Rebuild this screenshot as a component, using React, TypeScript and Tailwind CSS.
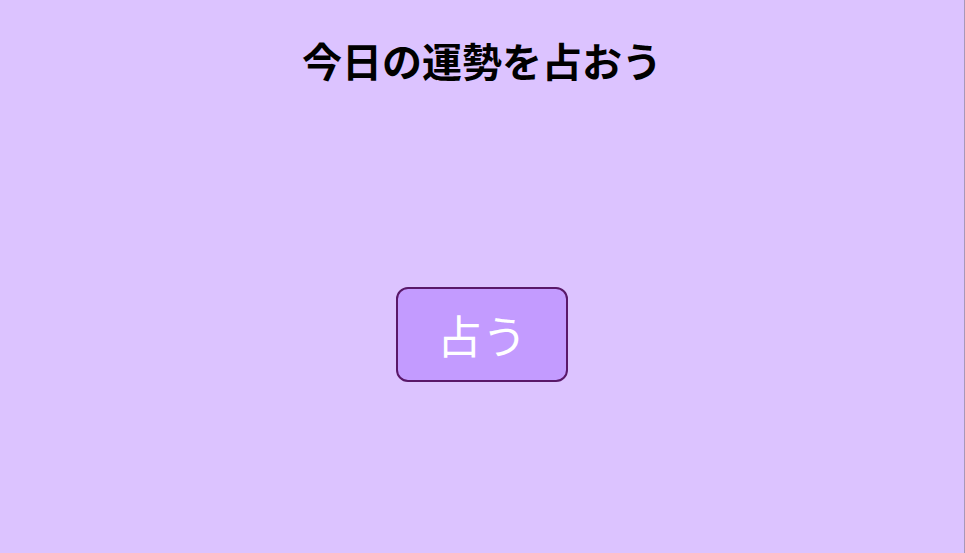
export default function App() {
  return (
    <main
      className="flex h-[553px] w-full flex-col items-center border-r border-[#a898b8] bg-[#dcc3ff]"
      style={{ fontFamily: '"Noto Sans CJK JP", "Noto Sans", sans-serif' }}
    >
      <h1 className="mt-[32px] text-[40px] leading-[56px] font-bold text-black">今日の運勢を占おう</h1>
      <div className="flex flex-1 items-center justify-center pt-[27px]">
        <button className="flex h-[95px] w-[172px] items-center justify-center rounded-xl border-2 border-[#5a1869] bg-[#c39bff] text-[45px] leading-none font-normal text-white">
          占う
        </button>
      </div>
    </main>
  )
}
